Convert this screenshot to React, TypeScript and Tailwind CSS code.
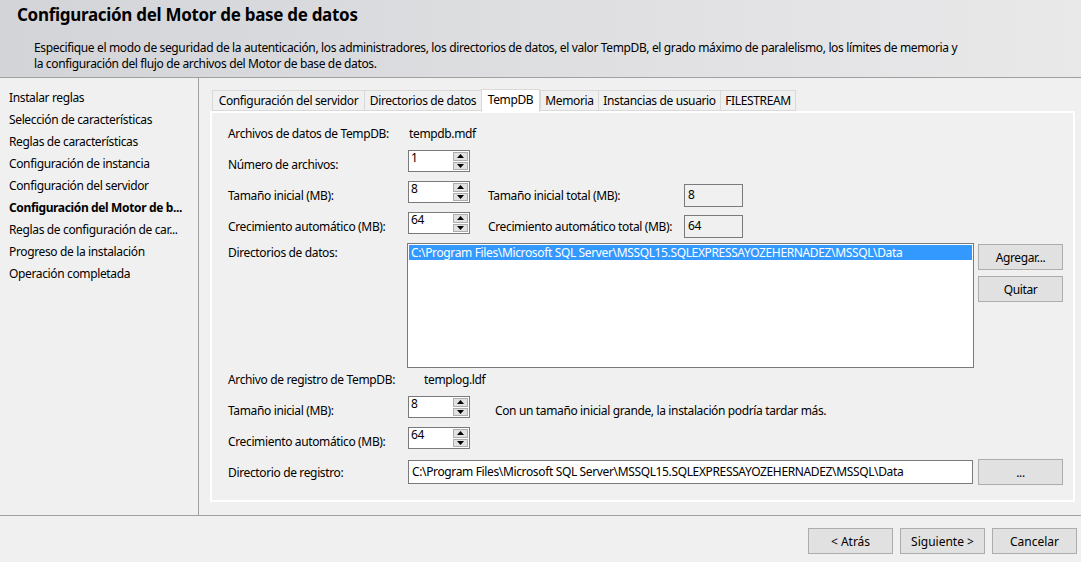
import React from "react";

const font = { fontFamily: '"Noto Sans", "Open Sans", Arial, sans-serif' };

function Spinner({ value }: { value: string }) {
  return (
    <div className="flex h-[22px] w-[62px] shrink-0 border border-[#7a7a7a] bg-white">
      <div className="flex-1 pl-[2px] text-[12px] leading-[14px]">{value}</div>
      <div className="flex w-[16px] flex-col gap-[1px] py-[1px] pr-[1px]">
        <div className="flex flex-1 items-center justify-center border border-[#adadad] bg-[#e1e1e1]">
          <svg width="7" height="4" viewBox="0 0 7 4"><path d="M0 4 L3.5 0 L7 4 Z" fill="#000" /></svg>
        </div>
        <div className="flex flex-1 items-center justify-center border border-[#adadad] bg-[#e1e1e1]">
          <svg width="7" height="4" viewBox="0 0 7 4"><path d="M0 0 L3.5 4 L7 0 Z" fill="#000" /></svg>
        </div>
      </div>
    </div>
  );
}

function ReadBox({ value }: { value: string }) {
  return (
    <div className="h-[23px] w-[59px] border border-[#7a7a7a] bg-[#f0f0f0] pl-[3px] text-[12px] leading-[20px]">
      {value}
    </div>
  );
}

function Btn({ children }: { children: React.ReactNode }) {
  return (
    <div className="flex h-[26px] w-[85px] shrink-0 items-center justify-center border border-[#adadad] bg-[#e1e1e1] pt-[1px] text-[12px]">
      {children}
    </div>
  );
}

function Label({ w, children }: { w: string; children: React.ReactNode }) {
  return <div className={`${w} shrink-0 whitespace-nowrap pt-[7px] leading-[16px]`}>{children}</div>;
}

export default function App() {
  const nav = [
    "Instalar reglas",
    "Selección de características",
    "Reglas de características",
    "Configuración de instancia",
    "Configuración del servidor",
    "Configuración del Motor de b...",
    "Reglas de configuración de car...",
    "Progreso de la instalación",
    "Operación completada",
  ];
  const tabs = [
    { t: "Configuración del servidor", w: "w-[152px]" },
    { t: "Directorios de datos", w: "w-[117px]" },
    { t: "TempDB", w: "w-[59px]" },
    { t: "Memoria", w: "w-[58px]" },
    { t: "Instancias de usuario", w: "w-[122px]" },
    { t: "FILESTREAM", w: "w-[76px]" },
  ];
  const path = "C:\\Program Files\\Microsoft SQL Server\\MSSQL15.SQLEXPRESSAYOZEHERNADEZ\\MSSQL\\Data";
  return (
    <div className="flex h-[562px] w-[1081px] flex-col overflow-hidden bg-[#f0f0f0] text-black" style={font}>
      {/* Header */}
      <div className="h-[78px] shrink-0 border-b border-[#a0a0a0] bg-gradient-to-r from-[#d3d4d8] to-[#e9e9ea]">
        <div className="pl-[17px] pt-[3px] text-[17px] font-bold leading-[24px] tracking-[-0.3px]">Configuración del Motor de base de datos</div>
        <div className="pl-[34px] pt-[13px] text-[12px] leading-[16px] tracking-[-0.36px]">
          <div>Especifique el modo de seguridad de la autenticación, los administradores, los directorios de datos, el valor TempDB, el grado máximo de paralelismo, los límites de memoria y</div>
          <div>la configuración del flujo de archivos del Motor de base de datos.</div>
        </div>
      </div>
      {/* Body */}
      <div className="flex h-[438px] shrink-0 border-b border-[#a0a0a0]">
        <div className="w-[199px] shrink-0 border-r border-[#a0a0a0] pl-[9px] pt-[10px]">
          {nav.map((n, i) => (
            <div key={n} className={`h-[22px] whitespace-nowrap text-[12px] leading-[20px] tracking-[-0.36px] ${i === 5 ? "font-bold" : ""}`}>{n}</div>
          ))}
        </div>
        <div className="flex flex-1 flex-col pl-[11px] pr-[6px] pt-[11px]">
          {/* Tabs */}
          <div className="flex h-[22px] items-end pl-[2px]">
            {tabs.map((t, i) =>
              i === 2 ? (
                <div key={t.t} className={`${t.w} relative z-10 -mb-[1px] h-[23px] border border-b-0 border-[#d9d9d9] bg-white text-center text-[12px] leading-[20px] tracking-[-0.36px]`}>{t.t}</div>
              ) : (
                <div key={t.t} className={`${t.w} h-[21px] border border-r-0 border-[#d9d9d9] bg-[#f0f0f0] text-center text-[12px] leading-[20px] tracking-[-0.36px] last:border-r`}>{t.t}</div>
              )
            )}
          </div>
          {/* Panel */}
          <div className="h-[391px] border-2 border-white bg-[#f0f0f0] pl-[16px] pt-[11px] text-[12px] tracking-[-0.36px]">
            <div className="flex h-[20px] items-center">
              <div className="w-[181px]">Archivos de datos de TempDB:</div>
              <div>tempdb.mdf</div>
            </div>
            <div className="mt-[6px] flex h-[31px] items-start">
              <Label w="w-[180px]">Número de archivos:</Label>
              <Spinner value="1" />
            </div>
            <div className="flex h-[31px] items-start">
              <Label w="w-[180px]">Tamaño inicial (MB):</Label>
              <Spinner value="8" />
              <div className="w-[214px] shrink-0 whitespace-nowrap pl-[18px] pt-[7px] leading-[16px]">Tamaño inicial total (MB):</div>
              <div className="pt-[3px]"><ReadBox value="8" /></div>
            </div>
            <div className="flex h-[31px] items-start">
              <Label w="w-[180px]">Crecimiento automático (MB):</Label>
              <Spinner value="64" />
              <div className="w-[214px] shrink-0 whitespace-nowrap pl-[18px] pt-[7px] leading-[16px]">Crecimiento automático total (MB):</div>
              <div className="pt-[3px]"><ReadBox value="64" /></div>
            </div>
            <div className="flex">
              <div className="w-[179px] shrink-0 pt-[2px] leading-[16px]">Directorios de datos:</div>
              <div className="h-[125px] w-[567px] shrink-0 border border-[#7a7a7a] bg-white p-[1px]">
                <div className="h-[15px] whitespace-nowrap bg-[#3399ff] pl-[2px] text-[12px] leading-[15px] text-white">{path}</div>
              </div>
              <div className="flex flex-col gap-[6px] pl-[4px] pt-[1px]">
                <Btn>Agregar...</Btn>
                <Btn>Quitar</Btn>
              </div>
            </div>
            <div className="flex h-[22px] items-center pt-[1px]">
              <div className="w-[196px]">Archivo de registro de TempDB:</div>
              <div>templog.ldf</div>
            </div>
            <div className="mt-[6px] flex h-[31px] items-start">
              <Label w="w-[180px]">Tamaño inicial (MB):</Label>
              <Spinner value="8" />
              <div className="whitespace-nowrap pl-[25px] pt-[7px] leading-[16px]">Con un tamaño inicial grande, la instalación podría tardar más.</div>
            </div>
            <div className="flex h-[31px] items-start">
              <Label w="w-[180px]">Crecimiento automático (MB):</Label>
              <Spinner value="64" />
            </div>
            <div className="mt-[1px] flex h-[26px] items-center">
              <div className="w-[180px] shrink-0 pt-[1px]">Directorio de registro:</div>
              <div className="h-[24px] w-[565px] shrink-0 whitespace-nowrap border border-[#7a7a7a] bg-white pl-[3px] text-[12px] leading-[21px]">{path}</div>
              <div className="pl-[5px]"><Btn>...</Btn></div>
            </div>
          </div>
        </div>
      </div>
      {/* Footer */}
      <div className="flex flex-1 justify-end gap-[7px] pr-[4px] pt-[12px]">
        <Btn>&lt; Atrás</Btn>
        <Btn>Siguiente &gt;</Btn>
        <Btn>Cancelar</Btn>
      </div>
    </div>
  );
}
